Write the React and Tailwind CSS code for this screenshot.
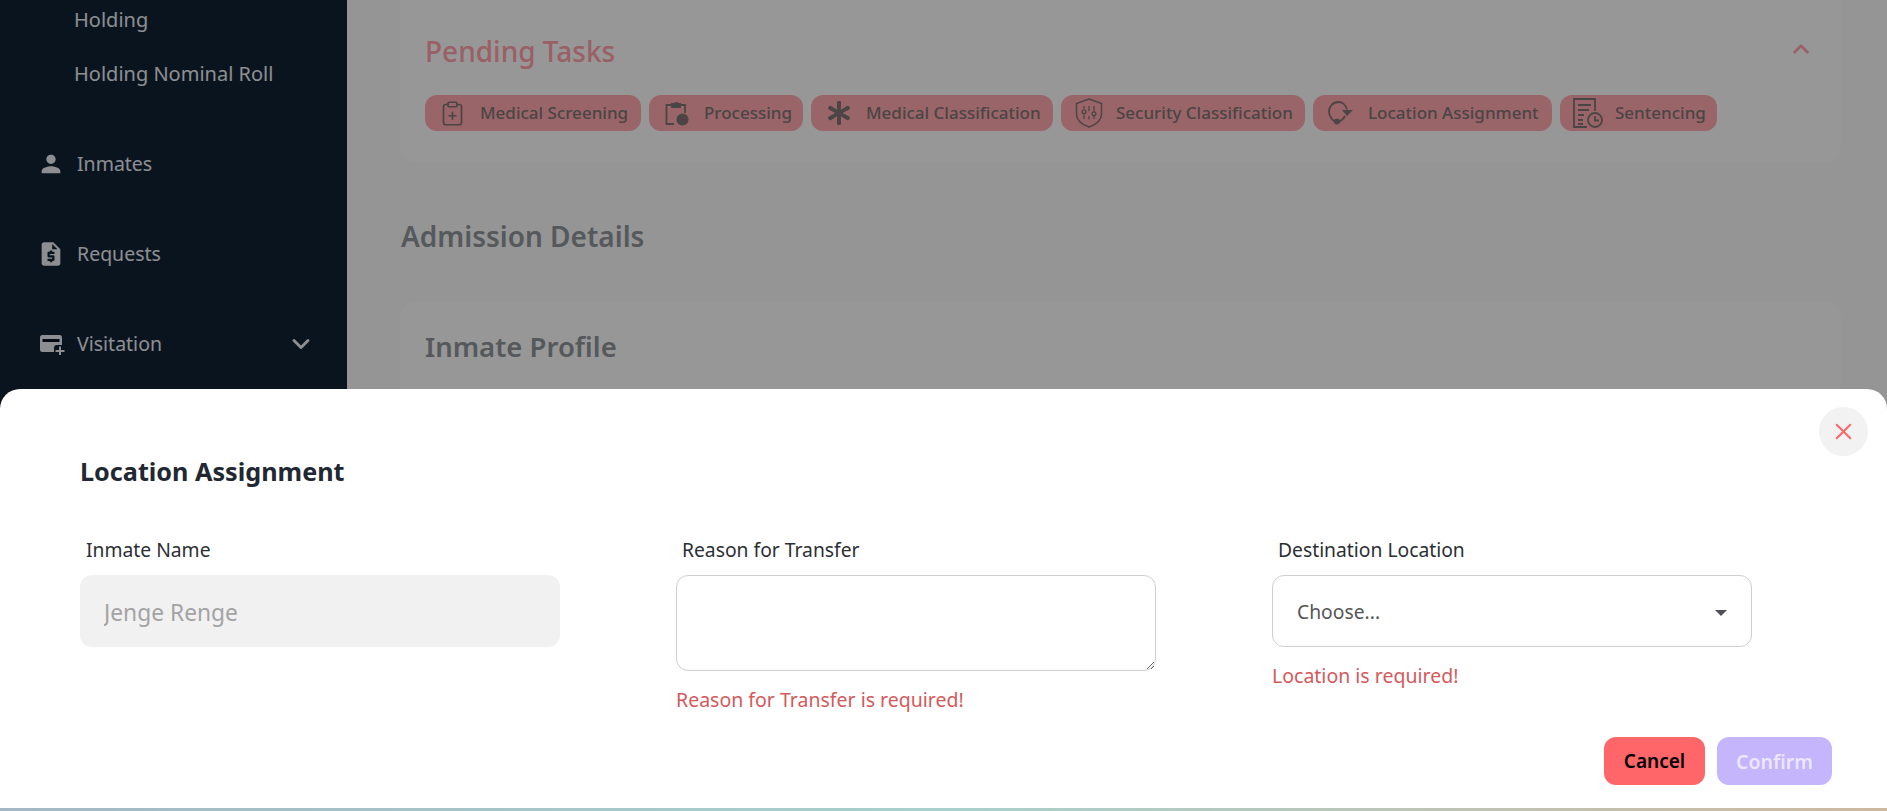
import React from "react";
import { X, ChevronUp, ChevronDown, ClipboardPlus } from "lucide-react";
import { FaAsterisk } from "react-icons/fa";
import { MdPerson, MdRequestQuote } from "react-icons/md";

const ClipboardClockIcon = () => (
  <svg viewBox="0 0 24 25" className="h-[25px] w-[24px]" fill="none" stroke="currentColor" strokeWidth="1.8">
    <path d="M7 4H1.500v19H9" />
    <path d="M15 4h5v8" />
    <path d="M7 6V3h2.500a2 2 0 0 1 3.500 0H15v3z" fill="currentColor" />
    <circle cx="17.500" cy="18.500" r="6" fill="currentColor" stroke="none" />
    <path d="M17.500 15v3.500l2.500 1.500" stroke="#a0666c" strokeWidth="1.200" />
  </svg>
);

const ShieldIcon = () => (
  <svg viewBox="0 0 28 30" className="h-[30px] w-[28px] shrink-0" fill="none" stroke="currentColor" strokeWidth="1.500">
    <path d="M14 1 26.500 5.500V16c0 6-5 10.500-12.500 13C6.500 26.500 1.500 22 1.500 16V5.500z" />
    <path d="M9 8v3M9 16.500V21M14 8v5M14 18v3.500M19 8v5.500M19 18v3" strokeWidth="1.300" />
    <circle cx="9" cy="13.800" r="1.900" strokeWidth="1.300" />
    <circle cx="19" cy="15.800" r="1.900" strokeWidth="1.300" />
  </svg>
);

const LocationLoopIcon = () => (
  <svg viewBox="0 0 25 24" className="h-[24px] w-[25px]" fill="none" stroke="currentColor" strokeWidth="1.800">
    <path d="M19 8.500C18 4 14.500 1 10.500 1 5 1 1 5.500 1 10.500c0 3.500 2 7 5.500 10" />
    <path d="M14 9h11l-6 6z" fill="currentColor" stroke="none" />
    <path d="M17 15c-1.500 3-4 5-7.500 6" />
    <circle cx="9" cy="20.500" r="3" fill="currentColor" stroke="none" />
  </svg>
);

const SentencingIcon = () => (
  <svg viewBox="0 0 30 30" className="h-[30px] w-[30px] shrink-0" fill="none" stroke="currentColor" strokeWidth="1.800">
    <path d="M14 29H1V1h21v12" />
    <path d="M5 7h13M5 12h11M5 17h6M5 22h5M5 26h5" />
    <circle cx="22" cy="22" r="7" />
    <path d="M22 18v4.500h4" />
  </svg>
);

const CardPlusIcon = () => (
  <svg viewBox="0 0 25 21" className="h-[21px] w-[25px]" fill="currentColor">
    <path d="M2.500 1h17A2.500 2.500 0 0 1 22 3.500V11h-5a3 3 0 0 0-3 3v4H2.500A2.500 2.500 0 0 1 0 15.500v-12A2.500 2.500 0 0 1 2.500 1z" />
    <rect x="2.500" y="5" width="17" height="3" fill="#0b1520" />
    <path d="M19 12.500h2V16h3.500v2H21v3h-2v-3h-3.500v-2H19z" />
  </svg>
);

const tasks = [
  { name: "Medical Screening", icon: <ClipboardPlus size={27} strokeWidth={1.5} />, width: "w-[216px]" },
  { name: "Processing", icon: <ClipboardClockIcon />, width: "w-[154px]" },
  { name: "Medical Classification", icon: <FaAsterisk size={24} />, width: "w-[242px]" },
  { name: "Security Classification", icon: <ShieldIcon />, width: "w-[244px]" },
  { name: "Location Assignment", icon: <LocationLoopIcon />, width: "w-[239px]" },
  { name: "Sentencing", icon: <SentencingIcon />, width: "w-[157px]" },
];

const NavItem = ({ icon, label, chevron }) => (
  <div className="flex h-[90px] items-center pl-[37px] pr-[32px]">
    <span className="flex w-[40px] shrink-0 justify-start">{icon}</span>
    <span className="text-[19.500px]">{label}</span>
    {chevron && <ChevronDown size={28} strokeWidth={2.5} className="ml-auto" />}
  </div>
);

export default function App() {
  return (
    <div className="relative h-[811px] w-full overflow-hidden bg-[#f8f9f9] font-['Noto_Sans',sans-serif]">
      <div className="flex h-full">
        <aside className="w-[347px] shrink-0 bg-[#122235] text-[#e9edf2]">
          <div className="flex h-[119px] flex-col pl-[74px] text-[20px]">
            <span className="mt-[6px] leading-[28px]">Holding</span>
            <span className="mt-[26px] leading-[28px]">Holding Nominal Roll</span>
          </div>
          <NavItem icon={<MdPerson size={28} />} label="Inmates" />
          <NavItem icon={<MdRequestQuote size={28} />} label="Requests" />
          <NavItem icon={<span className="pl-[3px] text-[#e9edf2]"><CardPlusIcon /></span>} label="Visitation" chevron />
        </aside>

        <main className="min-w-0 flex-1 pl-[53px] pr-[46px]">
          <section className="h-[162px] rounded-b-2xl bg-[#fcfcfc] px-[25px] pt-[31px]">
            <div className="flex items-center justify-between pr-[4px]">
              <h2 className="text-[28px] leading-[40px] font-medium text-[#ffa0aa]">Pending Tasks</h2>
              <ChevronUp size={26} strokeWidth={2.5} className="mr-[-2px] -mt-[4px] text-[#ffa0aa]" />
            </div>
            <div className="mt-[24px] flex gap-[8px]">
              {tasks.map((task) => (
                <div
                  key={task.name}
                  className={`flex h-[36px] items-center gap-[12px] rounded-[12px] bg-[#ffa8ae] pl-[12px] text-[#7d7373] ${task.width}`}
                >
                  <span className="flex w-[31px] shrink-0 justify-center">{task.icon}</span>
                  <span className="whitespace-nowrap text-[17px] font-medium">{task.name}</span>
                </div>
              ))}
            </div>
          </section>
          <h2 className="mt-[54px] pl-[1px] text-[28px] leading-[40px] font-semibold text-[#90949a]">Admission Details</h2>
          <section className="mt-[46px] h-[200px] rounded-2xl bg-[#fcfcfc] px-[25px] pt-[25px]">
            <h3 className="text-[27.500px] leading-[40px] font-semibold text-[#90949a]">Inmate Profile</h3>
          </section>
        </main>
      </div>

      {/* backdrop */}
      <div className="absolute inset-0 bg-black/40" />

      {/* bottom sheet */}
      <div className="absolute inset-x-0 bottom-[3px] h-[419px] rounded-t-[20px] bg-white pl-[80px] pt-[64px]">
        <button className="absolute right-[19px] top-[18px] flex h-[49px] w-[49px] items-center justify-center rounded-full bg-[#f2f2f2] text-[#ff6669]">
          <X size={27} strokeWidth={1.8} />
        </button>

        <h2 className="text-[25.200px] leading-[36px] font-bold text-[#212832]">Location Assignment</h2>

        <div className="mt-[47px] grid grid-cols-[480px_480px_480px] gap-x-[116px]">
          <div>
            <label className="ml-[6px] block text-[19.300px] leading-[28px] text-[#2b2f33]">Inmate Name</label>
            <input
              disabled
              value="Jenge Renge"
              className="mt-[11px] h-[72px] w-full rounded-[12px] bg-[#f1f1f1] px-[24px] pt-[2px] text-[22.800px] text-[#a3a3a3]"
            />
          </div>
          <div>
            <label className="ml-[6px] block text-[19.300px] leading-[28px] text-[#2b2f33]">Reason for Transfer</label>
            <textarea className="mt-[11px] block h-[96px] w-full rounded-[12px] border border-[#cfcfcf] bg-white" />
            <p className="mt-[16px] text-[19.500px] leading-[26px] text-[#d4595b]">Reason for Transfer is required!</p>
          </div>
          <div>
            <label className="ml-[6px] block text-[19.300px] leading-[28px] text-[#2b2f33]">Destination Location</label>
            <div className="relative mt-[11px]">
              <select className="h-[72px] w-full appearance-none rounded-[12px] border border-[#cfcfcf] bg-white px-[24px] pt-[3px] text-[19.300px] text-[#555555]">
                <option>Choose...</option>
              </select>
              <span className="absolute right-[25px] top-[35px] h-0 w-0 border-x-[6px] border-t-[6px] border-x-transparent border-t-[#4f4f55]" />
            </div>
            <p className="mt-[16px] text-[19.500px] leading-[26px] text-[#d4595b]">Location is required!</p>
          </div>
        </div>

        <div className="absolute bottom-[23px] right-[55px] flex gap-[12px]">
          <button className="h-[48px] w-[101px] rounded-[12px] bg-[#ff6669] pt-[1px] text-[19px] font-semibold text-black">Cancel</button>
          <button className="h-[48px] w-[115px] rounded-[12px] bg-[#c4b5fd] pt-[1px] text-[19.500px] font-semibold text-[#ece6ff]">Confirm</button>
        </div>
      </div>

      {/* strip along the bottom edge */}
      <div className="absolute inset-x-0 bottom-0 h-[3px] bg-gradient-to-r from-[#a3b8c4] via-[#a8d0cc] to-[#cdb8a0]" />
    </div>
  );
}
